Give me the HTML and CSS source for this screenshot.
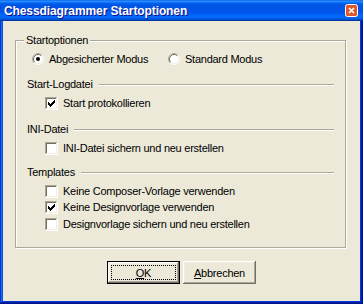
FILE: index.html
```html
<!DOCTYPE html>
<html lang="de">
<head>
    <meta charset="UTF-8">
    <title>Chessdiagrammer Startoptionen</title>
    <link rel="stylesheet" href="styles.css">
</head>
<body>

<div class="window">
    <div class="titlebar">
        <span class="title">Chessdiagrammer Startoptionen</span>
        <span class="close-btn">
            <svg width="13" height="13" viewBox="0 0 13 13">
                <rect x="0.5" y="0.5" width="12" height="12" rx="2" fill="#e0572c" stroke="#fff"/>
                <path d="M4 4 L9 9 M9 4 L4 9" stroke="#fff" stroke-width="1.6"/>
            </svg>
        </span>
    </div>

    <div class="dialog">
        <div class="group">
            <div class="group-title">Startoptionen</div>

            <div class="row radio-row">
                <label class="option option-first">
                    <svg class="radio" width="12" height="12" viewBox="0 0 12 12">
                        <circle cx="6" cy="6" r="5" fill="#fff"/>
                        <path d="M2.11 9.89 A5.5 5.5 0 0 1 9.89 2.11" fill="none" stroke="#aca899"/>
                        <path d="M9.89 2.11 A5.5 5.5 0 0 1 2.11 9.89" fill="none" stroke="#fff"/>
                        <path d="M2.82 9.18 A4.5 4.5 0 0 1 9.18 2.82" fill="none" stroke="#716f64"/>
                        <path d="M9.18 2.82 A4.5 4.5 0 0 1 2.82 9.18" fill="none" stroke="#f1efe2"/>
                        <circle cx="6" cy="6" r="2" fill="#000"/>
                    </svg>
                    Abgesicherter Modus
                </label>
                <label class="option">
                    <svg class="radio" width="12" height="12" viewBox="0 0 12 12">
                        <circle cx="6" cy="6" r="5" fill="#fff"/>
                        <path d="M2.11 9.89 A5.5 5.5 0 0 1 9.89 2.11" fill="none" stroke="#aca899"/>
                        <path d="M9.89 2.11 A5.5 5.5 0 0 1 2.11 9.89" fill="none" stroke="#fff"/>
                        <path d="M2.82 9.18 A4.5 4.5 0 0 1 9.18 2.82" fill="none" stroke="#716f64"/>
                        <path d="M9.18 2.82 A4.5 4.5 0 0 1 2.82 9.18" fill="none" stroke="#f1efe2"/>
                    </svg>
                    Standard Modus
                </label>
            </div>

            <div class="row section section-log">
                <span>Start-Logdatei</span>
                <span class="rule"></span>
            </div>
            <div class="row check-row gap-3">
                <svg class="check" width="13" height="13" viewBox="0 0 13 13" shape-rendering="crispEdges">
                    <rect x="0" y="0" width="13" height="13" fill="#fff"/>
                    <rect x="0" y="0" width="12" height="1" fill="#aca899"/>
                    <rect x="0" y="0" width="1" height="12" fill="#aca899"/>
                    <rect x="1" y="1" width="10" height="1" fill="#716f64"/>
                    <rect x="1" y="1" width="1" height="10" fill="#716f64"/>
                    <rect x="1" y="11" width="11" height="1" fill="#f1efe2"/>
                    <rect x="11" y="1" width="1" height="11" fill="#f1efe2"/>
                    <path d="M3 5V8H4V9H5V10H6V9H7V8H8V7H9V6H10V3H9V4H8V5H7V6H6V7H5V6H4V5Z" fill="#000"/>
                </svg>
                Start protokollieren
            </div>

            <div class="row section section-ini">
                <span>INI-Datei</span>
                <span class="rule"></span>
            </div>
            <div class="row check-row gap-3">
                <svg class="check" width="13" height="13" viewBox="0 0 13 13" shape-rendering="crispEdges">
                    <rect x="0" y="0" width="13" height="13" fill="#fff"/>
                    <rect x="0" y="0" width="12" height="1" fill="#aca899"/>
                    <rect x="0" y="0" width="1" height="12" fill="#aca899"/>
                    <rect x="1" y="1" width="10" height="1" fill="#716f64"/>
                    <rect x="1" y="1" width="1" height="10" fill="#716f64"/>
                    <rect x="1" y="11" width="11" height="1" fill="#f1efe2"/>
                    <rect x="11" y="1" width="1" height="11" fill="#f1efe2"/>
                </svg>
                INI-Datei sichern und neu erstellen
            </div>

            <div class="row section section-tpl">
                <span>Templates</span>
                <span class="rule"></span>
            </div>
            <div class="row check-row gap-3">
                <svg class="check" width="13" height="13" viewBox="0 0 13 13" shape-rendering="crispEdges">
                    <rect x="0" y="0" width="13" height="13" fill="#fff"/>
                    <rect x="0" y="0" width="12" height="1" fill="#aca899"/>
                    <rect x="0" y="0" width="1" height="12" fill="#aca899"/>
                    <rect x="1" y="1" width="10" height="1" fill="#716f64"/>
                    <rect x="1" y="1" width="1" height="10" fill="#716f64"/>
                    <rect x="1" y="11" width="11" height="1" fill="#f1efe2"/>
                    <rect x="11" y="1" width="1" height="11" fill="#f1efe2"/>
                </svg>
                Keine Composer-Vorlage verwenden
            </div>
            <div class="row check-row">
                <svg class="check" width="13" height="13" viewBox="0 0 13 13" shape-rendering="crispEdges">
                    <rect x="0" y="0" width="13" height="13" fill="#fff"/>
                    <rect x="0" y="0" width="12" height="1" fill="#aca899"/>
                    <rect x="0" y="0" width="1" height="12" fill="#aca899"/>
                    <rect x="1" y="1" width="10" height="1" fill="#716f64"/>
                    <rect x="1" y="1" width="1" height="10" fill="#716f64"/>
                    <rect x="1" y="11" width="11" height="1" fill="#f1efe2"/>
                    <rect x="11" y="1" width="1" height="11" fill="#f1efe2"/>
                    <path d="M3 5V8H4V9H5V10H6V9H7V8H8V7H9V6H10V3H9V4H8V5H7V6H6V7H5V6H4V5Z" fill="#000"/>
                </svg>
                Keine Designvorlage verwenden
            </div>
            <div class="row check-row gap-1">
                <svg class="check" width="13" height="13" viewBox="0 0 13 13" shape-rendering="crispEdges">
                    <rect x="0" y="0" width="13" height="13" fill="#fff"/>
                    <rect x="0" y="0" width="12" height="1" fill="#aca899"/>
                    <rect x="0" y="0" width="1" height="12" fill="#aca899"/>
                    <rect x="1" y="1" width="10" height="1" fill="#716f64"/>
                    <rect x="1" y="1" width="1" height="10" fill="#716f64"/>
                    <rect x="1" y="11" width="11" height="1" fill="#f1efe2"/>
                    <rect x="11" y="1" width="1" height="11" fill="#f1efe2"/>
                </svg>
                Designvorlage sichern und neu erstellen
            </div>
        </div>

        <div class="buttons">
            <button class="btn btn-default"><span class="focus"><u>O</u>K</span></button>
            <button class="btn"><u>A</u>bbrechen</button>
        </div>
    </div>
</div>

</body>
</html>
```

FILE: styles.css
```css
body {
    margin: 0;
    font-family: 'Liberation Sans', Arial, sans-serif;
    font-size: 11px;
    letter-spacing: -0.25px;
    color: #000;
}

.window {
    width: 363px;
    height: 304px;
    box-sizing: border-box;
    display: flex;
    flex-direction: column;
    background: #0831d9;
    box-shadow: inset -1px -1px #00138c, inset 1px 1px #0831d9,
                inset -2px -2px #001ea0, inset 2px 2px #166aee,
                inset -3px -3px #003bda, inset 3px 3px #0855dd;
}

/* caption */
.titlebar {
    height: 21px;
    display: flex;
    align-items: center;
    justify-content: space-between;
    padding: 0 5px 0 4px;
    background: linear-gradient(to bottom, #0058ee 0%, #3593ff 5%, #127dff 10%,
        #0262ee 16%, #0057e5 22%, #0054e3 30%, #0055eb 56%, #005bf5 66%,
        #026afe 76%, #0062ef 86%, #0052d6 92%, #0040ab 96%, #003092 100%);
}
.title {
    color: #fff;
    font-weight: bold;
    font-size: 12px;
    letter-spacing: -0.1px;
    text-shadow: 1px 1px #0f1089;
    padding-top: 1px;
}
.close-btn {
    display: flex;
    width: 13px;
    height: 13px;
}

.dialog {
    flex: 1;
    margin: 0 3px 3px;
    background: #ece9d8;
    display: flex;
    flex-direction: column;
}

/* group box */
.group {
    margin: 19px 0 0 12px;
    width: 331px;
    box-sizing: border-box;
    border: 1px solid #aca899;
    box-shadow: inset 1px 1px #fff, 1px 1px #fff;
    padding: 0 0 15px 0;
}
.group-title {
    width: max-content;
    margin: -7px 0 0 8px;
    padding: 0 2px;
    line-height: 13px;
    background: #ece9d8;
}

.row {
    height: 16px;
    display: flex;
    align-items: center;
}

.radio-row {
    margin-top: 4px;
    padding-left: 16px;
}
.option {
    display: flex;
    align-items: center;
    gap: 5px;
}
.option-first {
    width: 136px;
}

.section {
    padding-left: 11px;
    margin-right: 11px;
    gap: 6px;
}
.section-log { margin-top: 9px; }
.section-ini { margin-top: 10px; }
.section-tpl { margin-top: 8px; }
.rule {
    flex: 1;
    height: 1px;
    background: #aca899;
    border-bottom: 1px solid #fff;
    margin-top: 1px;
}

.check-row {
    padding-left: 29px;
    gap: 5px;
}
.gap-3 { margin-top: 3px; }
.gap-1 { margin-top: 1px; }

/* buttons */
.buttons {
    margin-top: 13px;
    display: flex;
    justify-content: center;
    gap: 3px;
}
.btn {
    width: 73px;
    height: 23px;
    padding: 0;
    border: none;
    background: #ece9d8;
    font-family: inherit;
    font-size: 11px;
    letter-spacing: -0.25px;
    color: #000;
    box-shadow: inset -1px -1px #716f64, inset 1px 1px #fff,
                inset -2px -2px #aca899, inset 2px 2px #f1efe2;
}
.btn-default {
    border: 1px solid #000;
    display: flex;
    padding: 3px;
}
.focus {
    flex: 1;
    display: flex;
    align-items: center;
    justify-content: center;
    border: 1px dotted #000;
}
```
